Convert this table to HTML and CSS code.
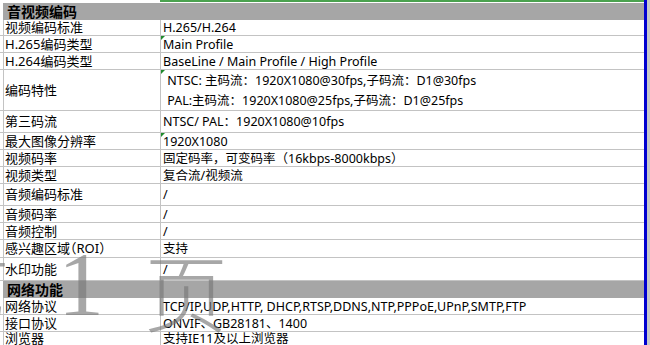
FILE: index.html
```html
<!DOCTYPE html>
<html lang="zh-CN">
<head>
<meta charset="utf-8">
<title>参数表</title>
<link rel="stylesheet" href="styles.css">
</head>
<body>
<div class="sheet">
  <div class="table">
    <div class="topbar"><div class="sel"></div></div>
    <div class="row hdr h17"><div class="hcell">音视频编码</div></div>
    <div class="row h16"><div class="a">视频编码标准</div><div class="b">H.265/H.264</div></div>
    <div class="row h17"><div class="a">H.265编码类型</div><div class="b flag">Main Profile</div></div>
    <div class="row h17"><div class="a">H.264编码类型</div><div class="b">BaseLine / Main Profile / High Profile</div></div>
    <div class="row h41"><div class="a">编码特性</div><div class="b flag multi"><span class="ln"> NTSC: 主码流：1920X1080@30fps,子码流：D1@30fps</span><span class="ln"> PAL:主码流：1920X1080@25fps,子码流：D1@25fps</span></div></div>
    <div class="row h22"><div class="a">第三码流</div><div class="b">NTSC/ PAL：1920X1080@10fps</div></div>
    <div class="row h17"><div class="a">最大图像分辨率</div><div class="b flag">1920X1080</div></div>
    <div class="row h17"><div class="a">视频码率</div><div class="b">固定码率，可变码率（16kbps-8000kbps）</div></div>
    <div class="row h17"><div class="a">视频类型</div><div class="b">复合流/视频流</div></div>
    <div class="row h22"><div class="a">音频编码标准</div><div class="b">/</div></div>
    <div class="row h17"><div class="a">音频码率</div><div class="b">/</div></div>
    <div class="row h17"><div class="a">音频控制</div><div class="b">/</div></div>
    <div class="row h18"><div class="a">感兴趣区域（ROI）</div><div class="b">支持</div></div>
    <div class="row h23"><div class="a">水印功能</div><div class="b">/</div></div>
    <div class="row hdr h17"><div class="hcell">网络功能</div></div>
    <div class="row h17"><div class="a">网络协议</div><div class="b">TCP/IP,UDP,HTTP, DHCP,RTSP,DDNS,NTP,PPPoE,UPnP,SMTP,FTP</div></div>
    <div class="row h17"><div class="a">接口协议</div><div class="b">ONVIF、GB28181、1400</div></div>
    <div class="row h14"><div class="a">浏览器</div><div class="b">支持IE11及以上浏览器</div></div>
  </div>
  <div class="bluebar"></div>
  <div class="gutter"></div>
  <div class="watermark"><span class="wm-di">第</span><span class="wm-num">1</span><span class="wm-ye">页</span></div>
</div>
</body>
</html>
```

FILE: styles.css
```css
html, body {
  margin: 0;
  padding: 0;
  background: #ffffff;
}

body {
  width: 650px;
  height: 345px;
  overflow: hidden;
  font-family: "Noto Sans", "Noto Sans CJK SC", sans-serif;
  font-size: 12.5px;
  color: #000000;
}

.sheet {
  position: relative;
  display: flex;
  width: 650px;
  height: 345px;
  overflow: hidden;
}

.table {
  width: 644px;
  display: flex;
  flex-direction: column;
  flex: none;
}

.topbar {
  height: 3px;
  flex: none;
}

.sel {
  margin-left: 160px;
  height: 2px;
  background: #4ba24f;
}

.row {
  display: grid;
  grid-template-columns: 161px 1fr;
  border-bottom: 1px solid #c3c3c3;
  box-sizing: border-box;
  flex: none;
}

.h14 { height: 14px; }
.h16 { height: 16px; }
.h17 { height: 17px; }
.h18 { height: 18px; }
.h22 { height: 22px; }
.h23 { height: 23px; }
.h41 { height: 41px; }

.a {
  margin-left: 3px;
  border-left: 1px solid #c3c3c3;
  border-right: 1px solid #c3c3c3;
  padding-left: 1px;
  display: flex;
  align-items: center;
  white-space: nowrap;
  overflow: hidden;
  line-height: 15px;
  font-size: 13px;
  font-feature-settings: "halt" 1;
}

.b {
  position: relative;
  padding-left: 2px;
  display: flex;
  align-items: center;
  white-space: pre;
  overflow: hidden;
  line-height: 15px;
}

.b.multi {
  flex-direction: column;
  align-items: flex-start;
  justify-content: center;
  gap: 5px;
  padding-left: 3px;
}

.flag::before {
  content: "";
  position: absolute;
  left: 0;
  top: 0;
  border-top: 4px solid #1f8a2c;
  border-right: 4px solid transparent;
}

.hdr {
  display: flex;
  margin-left: 3px;
  background: #a6a6a6;
  border-bottom: 1px solid #a6a6a6;
}

.hcell {
  padding-left: 4px;
  font-family: "Noto Sans CJK SC", sans-serif;
  font-weight: 700;
  font-size: 14px;
  line-height: 16px;
  display: flex;
  align-items: center;
}

.bluebar {
  width: 3px;
  height: 345px;
  background: #0000cf;
  flex: none;
}

.gutter {
  width: 3px;
  height: 345px;
  background: #c8c8c8;
  flex: none;
}

.watermark {
  position: absolute;
  left: 0;
  top: 0;
  width: 650px;
  height: 345px;
  pointer-events: none;
  color: rgba(120, 120, 120, 0.65);
}

.wm-di, .wm-ye {
  position: absolute;
  font-family: "Noto Sans CJK SC", sans-serif;
  font-weight: 200;
  font-size: 84px;
  line-height: 84px;
}

.wm-di {
  left: -74px;
  top: 248px;
}

.wm-ye {
  left: 144px;
  top: 248px;
}

.wm-num {
  position: absolute;
  left: 58px;
  top: 238px;
  font-family: "Liberation Serif", serif;
  font-size: 92px;
  line-height: 92px;
  font-weight: 400;
}
```
